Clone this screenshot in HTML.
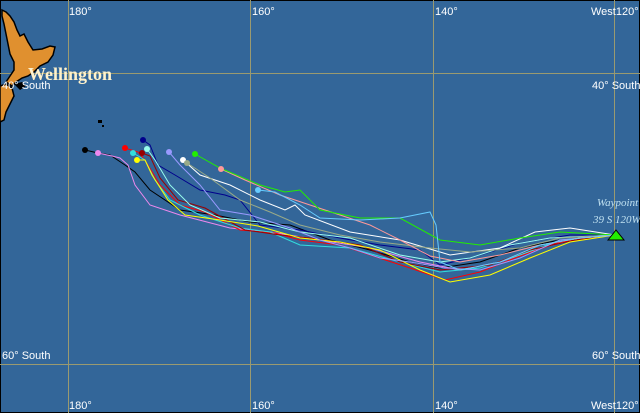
<!DOCTYPE html>
<html><head><style>
html,body{margin:0;padding:0;background:#336699;}
svg{display:block}
text{font-family:"Liberation Sans",sans-serif;font-size:11px;fill:#fff}
</style></head><body>
<svg width="640" height="413" viewBox="0 0 640 413" xmlns="http://www.w3.org/2000/svg">
<rect x="0" y="0" width="640" height="413" fill="#336699"/>
<rect x="0.5" y="0.5" width="639" height="412" fill="none" stroke="#000" stroke-width="1"/>
<g stroke="#9a9a70" stroke-width="1" shape-rendering="crispEdges">
<line x1="68.5" y1="0" x2="68.5" y2="413"/>
<line x1="250.5" y1="0" x2="250.5" y2="413"/>
<line x1="433.5" y1="0" x2="433.5" y2="413"/>
<line x1="614.5" y1="0" x2="614.5" y2="413"/>
<line x1="0" y1="73.5" x2="640" y2="73.5"/>
<line x1="0" y1="364.5" x2="640" y2="364.5"/>
</g>
<!-- New Zealand -->
<path d="M2,10 L6,12 L10,16 L14,22 L17,30 L20,36 L24,34 L28,42 L33,50 L42,49 L50,46 L55,47 L53,55 L48,62 L40,66 L34,72 L28,76 L22,78 L16,82 L12,86 L6,82 L10,76 L14,70 L14,62 L10,54 L8,44 L6,34 L4,24 L2,16 Z" fill="#e0902f" stroke="#000" stroke-width="1.5"/>
<path d="M0,86 L6,84 L12,88 L14,96 L10,104 L6,112 L4,120 L0,122 Z" fill="#e0902f" stroke="#000" stroke-width="1.5"/>
<path d="M14,84 L22,82 L26,86 L20,90 Z" fill="#000"/>
<rect x="98" y="120" width="4" height="3" fill="#000"/><rect x="102" y="125" width="2" height="2" fill="#000"/>
<text x="28" y="80" style="font-family:'Liberation Serif',serif;font-weight:bold;font-size:18px;fill:#fff2cc">Wellington</text>
<text x="69" y="15">180°</text>
<text x="252" y="15">160°</text>
<text x="435" y="15">140°</text>
<text x="591" y="15">West120°</text>
<text x="69" y="409">180°</text>
<text x="252" y="409">160°</text>
<text x="435" y="409">140°</text>
<text x="591" y="409">West120°</text>
<text x="2" y="89">40° South</text>
<text x="592" y="89">40° South</text>
<text x="2" y="359">60° South</text>
<text x="592" y="359">60° South</text>
<text x="597" y="206" style="font-family:'Liberation Serif',serif;font-style:italic;font-size:11px;fill:#bfe0f0">Waypoint</text>
<text x="593" y="223" style="font-family:'Liberation Serif',serif;font-style:italic;font-size:11px;fill:#bfe0f0">39 S 120W</text>
<g fill="none" stroke-width="1">
<polyline stroke="#000" points="85,150 98,153 110,155 125,165 135,172 150,190 180,210 215,215 250,222 290,225 330,240 370,250 410,262 440,268 480,262 520,248 560,240 615,235"/>
<polyline stroke="#ee88ee" points="98,153 112,156 120,158 128,165 135,185 150,205 180,215 230,228 270,232 320,240 370,248 420,262 460,270 500,262 540,248 580,238 615,235"/>
<polyline stroke="#ff0000" points="125,148 138,152 145,160 160,185 180,205 205,212 240,230 275,233 300,240 340,245 370,255 410,268 445,280 480,272 520,256 560,242 615,235"/>
<polyline stroke="#00008c" points="143,140 150,145 158,165 175,175 200,190 225,195 240,200 260,225 300,230 340,238 380,245 420,250 440,265 470,258 520,243 570,235 615,235"/>
<polyline stroke="#33dddd" points="133,153 145,160 155,180 170,200 200,215 240,228 270,232 300,245 350,248 400,262 440,272 480,268 520,255 560,240 615,235"/>
<polyline stroke="#990000" points="142,153 150,156 160,178 178,200 205,208 245,230 280,235 310,238 360,245 400,262 440,270 490,265 530,250 575,240 615,235"/>
<polyline stroke="#ffff00" points="137,160 145,160 152,175 168,200 185,215 220,220 258,226 300,238 340,242 380,250 420,270 450,282 490,275 530,258 570,242 615,235"/>
<polyline stroke="#99ffee" points="147,149 155,160 170,185 190,205 220,218 260,222 300,232 350,238 400,255 440,262 470,258 510,245 550,238 615,235"/>
<polyline stroke="#9999ff" points="169,152 180,165 200,185 220,210 250,215 290,228 320,240 350,248 380,258 410,262 445,268 480,270 520,258 560,240 615,235"/>
<polyline stroke="#ffffff" points="183,160 200,175 230,185 260,200 285,210 295,205 305,215 350,232 400,240 450,255 500,248 535,232 570,228 615,235"/>
<polyline stroke="#99aa88" points="187,163 210,178 240,200 270,212 300,225 340,235 380,242 430,248 470,252 520,248 560,238 615,235"/>
<polyline stroke="#ff9999" points="221,169 245,180 280,195 310,205 340,215 370,225 400,240 430,256 460,262 500,255 540,245 580,238 615,235"/>
<polyline stroke="#22ee00" points="195,154 220,168 260,185 285,192 300,190 320,210 360,218 400,218 440,240 480,245 520,238 560,232 615,235"/>
<polyline stroke="#66ccff" points="258,190 275,192 300,205 320,218 360,220 400,218 430,212 436,225 440,262 460,270 500,262 540,245 580,238 615,235"/>
</g>
<g>
<circle cx="85" cy="150" r="3" fill="#000"/>
<circle cx="98" cy="153" r="3" fill="#ee88ee"/>
<circle cx="125" cy="148" r="3" fill="#ff0000"/>
<circle cx="143" cy="140" r="3" fill="#00008c"/>
<circle cx="133" cy="153" r="3" fill="#33dddd"/>
<circle cx="142" cy="153" r="3" fill="#990000"/>
<circle cx="137" cy="160" r="3" fill="#ffff00"/>
<circle cx="147" cy="149" r="3" fill="#99ffee"/>
<circle cx="169" cy="152" r="3" fill="#9999ff"/>
<circle cx="183" cy="160" r="3" fill="#ffffff"/>
<circle cx="187" cy="163" r="3" fill="#99aa88"/>
<circle cx="221" cy="169" r="3" fill="#ff9999"/>
<circle cx="195" cy="154" r="3" fill="#22ee00"/>
<circle cx="258" cy="190" r="3" fill="#66ccff"/>
</g>
<polygon points="608,240 616,230 624,240" fill="#22ee00" stroke="#000" stroke-width="1"/>
</svg>
</body></html>
